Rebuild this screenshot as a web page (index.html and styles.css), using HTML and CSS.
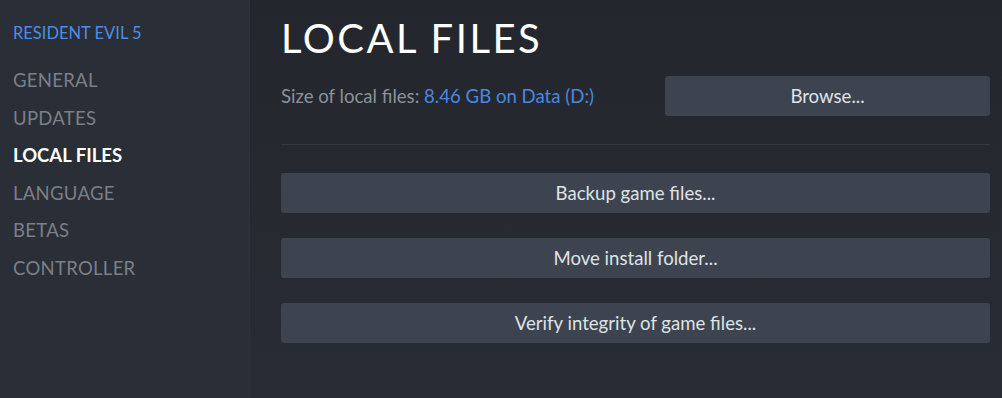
FILE: index.html
```html
<!DOCTYPE html>
<html lang="en">
<head>
    <meta charset="UTF-8">
    <title>Properties - Local Files</title>
    <link rel="stylesheet" href="styles.css">
</head>
<body>
    <div class="window">
        <div class="sidebar">
            <div class="game-title">RESIDENT EVIL 5</div>
            <ul class="nav">
                <li>GENERAL</li>
                <li>UPDATES</li>
                <li class="active">LOCAL FILES</li>
                <li>LANGUAGE</li>
                <li>BETAS</li>
                <li>CONTROLLER</li>
            </ul>
        </div>

        <div class="content">
            <h1>LOCAL FILES</h1>
            <div class="size-row">
                <div class="size-info">Size of local files: <span class="size-value">8.46 GB on Data (D:)</span></div>
                <button class="btn browse">Browse...</button>
            </div>
            <div class="divider"></div>
            <div class="actions">
                <button class="btn">Backup game files...</button>
                <button class="btn">Move install folder...</button>
                <button class="btn">Verify integrity of game files...</button>
            </div>
        </div>
    </div>
</body>
</html>
```

FILE: styles.css
```css
body {
    margin: 0;
    font-family: Lato, "Open Sans", sans-serif;
    background-color: #262a31;
    color: #dfe3e6;
}

.window {
    display: flex;
    height: 398px;
    overflow: hidden;
}

.sidebar {
    width: 250px;
    background-color: #2a2e36;
    border-right: 1px solid #2d3139;
    padding: 21px 0 0 13px;
    box-sizing: border-box;
}

.game-title {
    color: #4a8ee6;
    font-size: 16.5px;
    line-height: 24px;
    margin-bottom: 17px;
}

.nav {
    list-style: none;
    margin: 0;
    padding: 0;
}

.nav li {
    color: #7a8089;
    font-size: 18.5px;
    line-height: 37.5px;
    letter-spacing: 0.3px;
}

.nav li.active {
    color: #ffffff;
    font-weight: 700;
    letter-spacing: 0;
}

.content {
    flex: 1;
    padding: 10px 12px 0 31px;
    background: linear-gradient(to bottom, #23262d, #282c34);
}

h1 {
    margin: 0;
    font-family: Lato, sans-serif;
    font-weight: 400;
    font-size: 40px;
    line-height: 56px;
    letter-spacing: 2.5px;
    color: #ffffff;
}

.size-row {
    display: flex;
    align-items: center;
    justify-content: space-between;
    margin-top: 10px;
}

.size-info {
    font-size: 18.6px;
    color: #8b929a;
}

.size-value {
    color: #4a88e0;
}

.btn {
    display: block;
    height: 40px;
    border: none;
    border-radius: 3px;
    background-color: #3d4450;
    color: #dfe3e6;
    font-family: Lato, sans-serif;
    font-size: 18.6px;
    cursor: pointer;
}

.browse {
    width: 325px;
}

.divider {
    height: 1px;
    background-color: #33373f;
    margin: 28px 0 28px;
}

.actions {
    display: flex;
    flex-direction: column;
    gap: 25px;
}

.actions .btn {
    width: 100%;
}
```
